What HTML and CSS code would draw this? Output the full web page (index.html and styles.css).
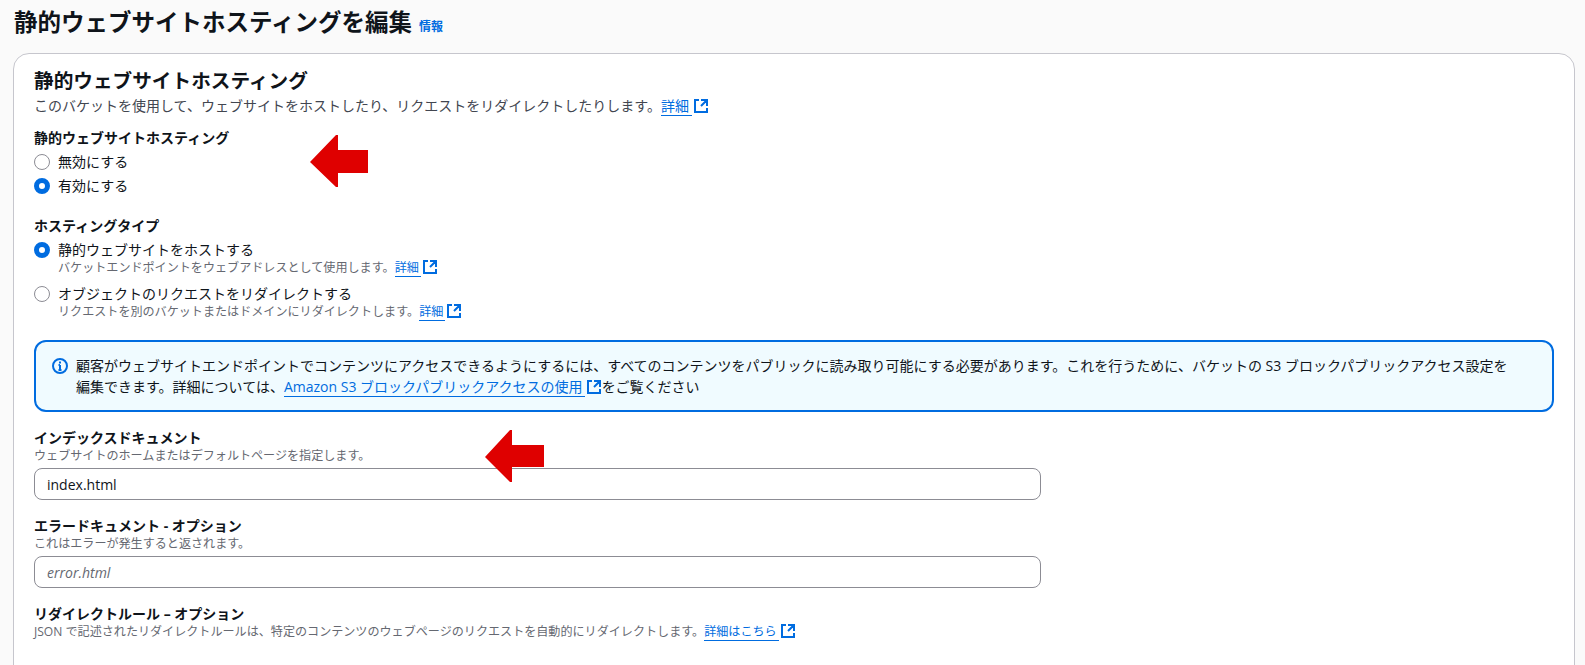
FILE: index.html
```html
<!DOCTYPE html>
<html lang="ja">
<head>
<meta charset="utf-8">
<title>静的ウェブサイトホスティングを編集</title>
<link rel="stylesheet" href="styles.css">
</head>
<body>
<svg width="0" height="0" class="defs">
  <symbol id="ext" viewBox="0 0 16 16"><path d="M14 8.01v-6H8M14.02 2 8 8.02M6 2.01H2v12h12v-3.99" fill="none" stroke="currentColor" stroke-width="2"/></symbol>
</svg>
<header class="page-head">
  <h1 class="page-title">静的ウェブサイトホスティングを編集</h1>
  <a class="info-link">情報</a>
</header>
<main class="card">
  <h2 class="card-title">静的ウェブサイトホスティング</h2>
  <p class="card-desc">このバケットを使用して、ウェブサイトをホストしたり、リクエストをリダイレクトしたりします。<a class="link">詳細</a><svg class="ext"><use href="#ext"/></svg></p>

  <section class="group-hosting">
    <div class="label">静的ウェブサイトホスティング</div>
    <div class="radio-list">
      <div class="radio-row"><span class="radio"></span><span class="radio-text">無効にする</span></div>
      <div class="radio-row"><span class="radio on"></span><span class="radio-text">有効にする</span></div>
    </div>
  </section>

  <section class="group-type">
    <div class="label">ホスティングタイプ</div>
    <div class="radio-block first">
      <span class="radio on"></span>
      <div>
        <div class="radio-text">静的ウェブサイトをホストする</div>
        <div class="sub">バケットエンドポイントをウェブアドレスとして使用します。<a class="link">詳細</a><svg class="ext"><use href="#ext"/></svg></div>
      </div>
    </div>
    <div class="radio-block">
      <span class="radio"></span>
      <div>
        <div class="radio-text">オブジェクトのリクエストをリダイレクトする</div>
        <div class="sub">リクエストを別のバケットまたはドメインにリダイレクトします。<a class="link">詳細</a><svg class="ext"><use href="#ext"/></svg></div>
      </div>
    </div>
  </section>

  <section class="alert">
    <svg class="alert-icon" viewBox="0 0 16 16"><circle cx="8" cy="8" r="7" fill="none" stroke="currentColor" stroke-width="2"/><path d="M8 7v5M6.5 12h3M6.5 7H8" fill="none" stroke="currentColor" stroke-width="2"/><rect x="7" y="3.5" width="2" height="2" fill="currentColor"/></svg>
    <p class="alert-text">顧客がウェブサイトエンドポイントでコンテンツにアクセスできるようにするには、すべてのコンテンツをパブリックに読み取り可能にする必要があります。これを行うために、バケットの S3 ブロックパブリックアクセス設定を<br>編集できます。詳細については、<a class="link">Amazon S3 ブロックパブリックアクセスの使用</a><svg class="ext"><use href="#ext"/></svg>をご覧ください</p>
  </section>

  <section class="field">
    <div class="label">インデックスドキュメント</div>
    <div class="sub">ウェブサイトのホームまたはデフォルトページを指定します。</div>
    <input class="input" type="text" value="index.html">
  </section>
  <section class="field">
    <div class="label">エラードキュメント - オプション</div>
    <div class="sub">これはエラーが発生すると返されます。</div>
    <input class="input" type="text" placeholder="error.html">
  </section>
  <section class="field">
    <div class="label">リダイレクトルール – オプション</div>
    <div class="sub">JSON で記述されたリダイレクトルールは、特定のコンテンツのウェブページのリクエストを自動的にリダイレクトします。<a class="link">詳細はこちら</a><svg class="ext"><use href="#ext"/></svg></div>
  </section>
</main>

<svg class="arrow arrow-one" viewBox="0 0 58 52"><path d="M0 27 26 0h2v15h30v23H28v14h-2z" fill="#df0000"/></svg>
<svg class="arrow arrow-two" viewBox="0 0 59 52"><path d="M0 27 25 0h2v15h32v22H27v15h-2z" fill="#df0000"/></svg>
</body>
</html>
```

FILE: styles.css
```css
* { box-sizing: border-box; }
html, body { margin: 0; height: 665px; overflow: hidden; }
body {
  position: relative;
  background: #fafafa;
  color: #0f141a;
  font-family: "Open Sans", "Noto Sans CJK JP", sans-serif;
  font-size: 14px;
  line-height: 20px;
}
.defs { position: absolute; }
.page-head {
  display: flex;
  align-items: baseline;
  gap: 7px;
  height: 53px;
  padding: 7px 0 0 14px;
}
.page-title { margin: 0; font-size: 23.5px; line-height: 30px; font-weight: 700; }
.info-link { color: #006ce0; font-size: 12px; line-height: 16px; font-weight: 700; }
.card {
  height: 640px;
  margin: 0 10px 0 13px;
  padding: 15px 20px;
  background: #fff;
  border: 1px solid #c6c6cd;
  border-radius: 16px;
}
.card-title { margin: 0; font-size: 19.65px; line-height: 24px; font-weight: 700; }
.card-desc { margin: 3px 0 0; color: #424650; }
.card-desc .link { padding-right: 3px; }
.link {
  color: #006ce0;
  border-bottom: 1px solid #006ce0;
  padding: 0 2px 0 0;
}
.ext { width: 16px; height: 16px; margin: -4px 0 -4px 1px; color: #006ce0; vertical-align: 1px; }
.group-hosting { margin-top: 12px; }
.label { font-weight: 700; }
.radio-list { margin-top: 2px; }
.radio-row { display: flex; align-items: center; gap: 8px; height: 24px; }
.radio {
  flex: none;
  width: 16px;
  height: 16px;
  border: 1px solid #8c8c94;
  border-radius: 50%;
  background: #fff;
}
.radio.on { border: 5px solid #006ce0; }
.radio-text { color: #0f141a; }
.group-type { margin-top: 18px; }
.radio-block { display: flex; gap: 8px; margin-top: 8px; }
.radio-block.first { margin-top: 4px; }
.radio-block .radio { margin-top: 2px; }
.sub { color: #656871; font-size: 12.08px; line-height: 16px; }
.alert {
  display: flex;
  gap: 8px;
  width: 1520px;
  margin-top: 20px;
  padding: 13px 16px;
  background: #f0fbff;
  border: 2px solid #006ce0;
  border-radius: 12px;
}
.alert-icon { flex: none; width: 16px; height: 16px; margin-top: 3px; color: #006ce0; }
.alert-text { margin: 0; line-height: 21px; white-space: nowrap; }
.field { margin-top: 16px; }
.input {
  display: block;
  width: 1007px;
  height: 32px;
  margin-top: 4px;
  padding: 0 12px;
  border: 1px solid #8c8c94;
  border-radius: 8px;
  background: #fff;
  color: #0f141a;
  font: 14px/20px "Open Sans", "Noto Sans CJK JP", sans-serif;
}
.input::placeholder { color: #656871; font-style: italic; opacity: 1; }
.arrow { position: absolute; }
.arrow-one { left: 310px; top: 135px; width: 58px; height: 52px; }
.arrow-two { left: 485px; top: 430px; width: 59px; height: 52px; }
```
